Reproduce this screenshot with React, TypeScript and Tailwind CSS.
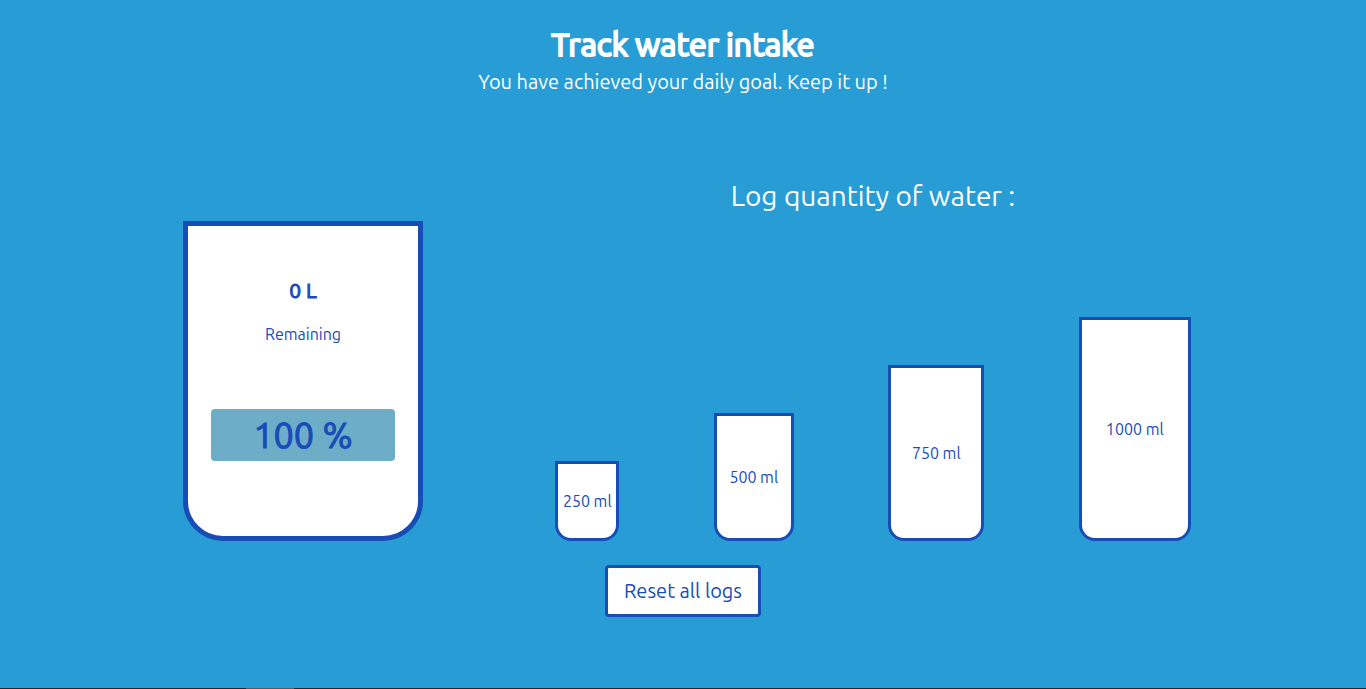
import { useState } from "react";

const GOAL_ML = 2000;

const CUPS = [
  { ml: 250, size: "h-20 w-16" },
  { ml: 500, size: "h-32 w-20" },
  { ml: 750, size: "h-44 w-24" },
  { ml: 1000, size: "h-56 w-28" },
];

function Glass({ logged }: { logged: number }) {
  const remaining = Math.max(0, GOAL_ML - logged) / 1000;
  const percent = Math.min(100, Math.round((logged / GOAL_ML) * 100));
  return (
    <section className="flex h-80 w-60 flex-col items-center rounded-b-[40px] border-5 border-[#184cb7] bg-white pt-12 text-[#184cb7]">
      <p className="text-[21px] leading-8 font-normal [-webkit-text-stroke:1px]">{remaining} L</p>
      <p className="mt-4 text-base leading-6">Remaining</p>
      <p className="mt-[63px] flex h-13 w-4/5 items-center justify-center rounded bg-[#6dadc7] text-4xl leading-10 font-normal [-webkit-text-stroke:1px]">
        {percent} %
      </p>
    </section>
  );
}

export default function App() {
  const [logged, setLogged] = useState(GOAL_ML);
  const message =
    logged >= GOAL_ML
      ? "You have achieved your daily goal. Keep it up !"
      : "Keep drinking to reach your daily goal !";

  return (
    <div className="flex min-h-screen flex-col bg-[#289dd5] font-['Ubuntu','Noto_Sans',sans-serif] text-white">
      <header className="pt-6 text-center">
        <h1 className="text-[32px] leading-10 font-normal [-webkit-text-stroke:2px]">Track water intake</h1>
        <p className="mt-1 text-xl leading-7">{message}</p>
      </header>

      <main className="mt-20 flex flex-1 flex-col items-center">
        <div className="flex w-full gap-[30px] px-32">
          <div className="flex w-[350px] shrink-0 items-end justify-center">
            <Glass logged={logged} />
          </div>
          <section className="flex h-[365px] flex-1 flex-col justify-between">
            <h2 className="text-center text-[28px] leading-10">Log quantity of water :</h2>
            <div className="flex items-end justify-around">
              {CUPS.map((cup) => (
                <button
                  key={cup.ml}
                  type="button"
                  onClick={() => setLogged(logged + cup.ml)}
                  className={`${cup.size} rounded-b-2xl border-3 border-[#184cb7] bg-white text-base leading-6 whitespace-nowrap text-[#184cb7]`}
                >
                  {cup.ml} ml
                </button>
              ))}
            </div>
          </section>
        </div>
        <button
          type="button"
          onClick={() => setLogged(0)}
          className="mt-6 h-13 rounded border-3 border-[#184cb7] bg-white px-4 text-xl leading-7 text-[#184cb7]"
        >
          Reset all logs
        </button>
      </main>

      <footer className="flex h-px bg-[#1b2733]">
        <div className="ml-[18%] h-px w-12 bg-[#4d5c68]" />
      </footer>
    </div>
  );
}
